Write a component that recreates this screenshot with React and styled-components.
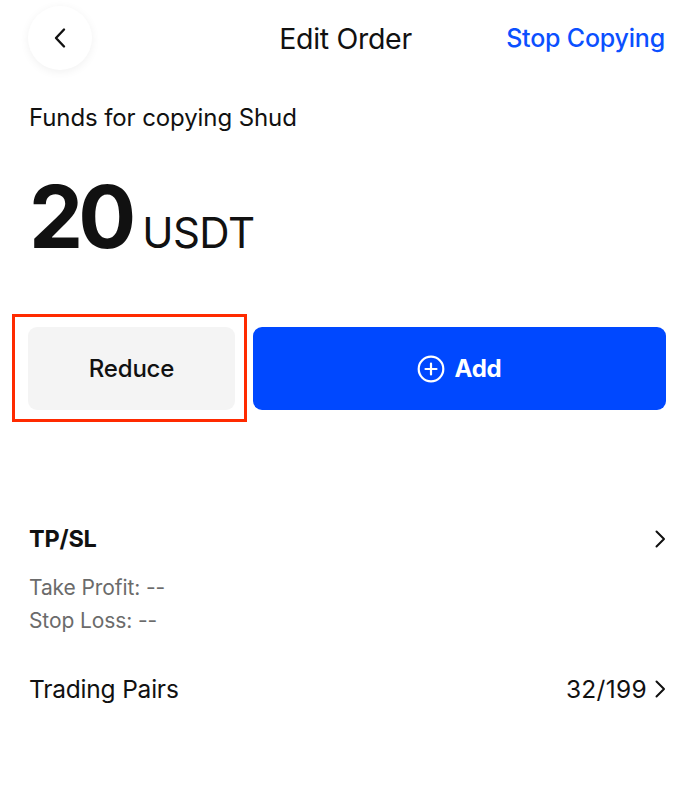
import React from 'react';
import styled, { createGlobalStyle } from 'styled-components';

const GlobalStyle = createGlobalStyle`
  html, body {
    margin: 0;
    padding: 0;
    background: #ffffff;
  }
  body {
    font-family: Inter, 'Noto Sans', Roboto, sans-serif;
    color: #111111;
  }
`;

const Page = styled.div`
  width: 695px;
  min-height: 794px;
  box-sizing: border-box;
  background: #fff;
`;

const Header = styled.header`
  display: grid;
  grid-template-columns: 1fr auto 1fr;
  align-items: center;
  padding: 6px 30px 0 28px;
  height: 64px;
`;

const BackButton = styled.button`
  width: 64px;
  height: 64px;
  border-radius: 50%;
  border: none;
  background: #fff;
  box-shadow: 0 2px 10px rgba(0, 0, 0, 0.06);
  display: flex;
  align-items: center;
  justify-content: center;
  padding: 0;
  justify-self: start;
`;

const Title = styled.h1`
  margin: 0;
  font-size: 28.5px;
  font-weight: 400;
  letter-spacing: -0.3px;
  transform: translateX(-1px);
`;

const HeaderLink = styled.a`
  justify-self: end;
  color: #0b50ff;
  font-size: 25px;
  font-weight: 500;
  letter-spacing: -0.2px;
`;

const Section = styled.section`
  padding: 0 29px;
`;

const Label = styled.p`
  margin: 33px 0 0;
  font-size: 24px;
  line-height: 30px;
  letter-spacing: -0.1px;
`;

const Amount = styled.div`
  display: flex;
  align-items: baseline;
  gap: 11px;
  margin-top: 41px;
  line-height: 1;
`;

const Big = styled.span`
  font-size: 86px;
  font-weight: 700;
  letter-spacing: -5px;
`;

const Unit = styled.span`
  font-size: 42px;
  font-weight: 400;
  letter-spacing: -0.5px;
`;

const Actions = styled.div`
  display: grid;
  grid-template-columns: 207px 1fr;
  gap: 18px;
  padding: 0 29px 0 28px;
  margin-top: 67px;
`;

const ButtonWrap = styled.div`
  position: relative;
`;

const Highlight = styled.div`
  position: absolute;
  top: -13px;
  left: -16px;
  right: -12px;
  bottom: -12px;
  border: 3px solid #ff2a00;
  pointer-events: none;
`;

const ActionButton = styled.button`
  width: 100%;
  height: 83px;
  border: none;
  border-radius: 9px;
  display: flex;
  align-items: center;
  justify-content: center;
  gap: 9px;
  font-family: inherit;
  font-size: 24px;
  letter-spacing: -0.2px;
  background: ${(p) => (p.$primary ? '#0048ff' : '#f4f4f4')};
  color: ${(p) => (p.$primary ? '#ffffff' : '#111111')};
  font-weight: ${(p) => (p.$primary ? 700 : 500)};
`;

const Row = styled.div`
  display: flex;
  align-items: center;
  justify-content: space-between;
  font-size: ${(p) => (p.$bold ? 23.5 : 24.5)}px;
  margin-top: ${(p) => p.$top || 0}px;
  font-weight: ${(p) => (p.$bold ? 700 : 400)};
  letter-spacing: -0.2px;
`;

const RowValue = styled.span`
  display: flex;
  align-items: center;
  gap: 7px;
  font-weight: 400;
  letter-spacing: 0.3px;
`;

const Detail = styled.div`
  font-size: 21px;
  color: #6b6b6b;
  line-height: 33px;
  margin-top: 18px;
  letter-spacing: -0.1px;
`;

const Chevron = () => (
  <svg width="12" height="20" viewBox="0 0 12 20" fill="none">
    <path
      d="M2.5 2.5l7.5 7.5-7.5 7.5"
      stroke="#111"
      strokeWidth="2"
      strokeLinecap="round"
      strokeLinejoin="round"
    />
  </svg>
);

const BackChevron = () => (
  <svg width="14" height="22" viewBox="0 0 14 22" fill="none">
    <path
      d="M11 2.5L3 11l8 8.5"
      stroke="#111"
      strokeWidth="2.4"
      strokeLinecap="round"
      strokeLinejoin="round"
    />
  </svg>
);

const PlusCircle = () => (
  <svg width="28" height="28" viewBox="0 0 28 28" fill="none">
    <circle cx="14" cy="14" r="12.3" stroke="#fff" strokeWidth="2.2" />
    <path d="M14 8.5v11M8.5 14h11" stroke="#fff" strokeWidth="2.2" strokeLinecap="round" />
  </svg>
);

export default function App() {
  return (
    <>
      <GlobalStyle />
      <Page>
        <Header>
          <BackButton aria-label="Back">
            <BackChevron />
          </BackButton>
          <Title>Edit Order</Title>
          <HeaderLink>Stop Copying</HeaderLink>
        </Header>

        <Section>
          <Label>Funds for copying Shud</Label>
          <Amount>
            <Big>20</Big>
            <Unit>USDT</Unit>
          </Amount>
        </Section>

        <Actions>
          <ButtonWrap>
            <Highlight />
            <ActionButton>Reduce</ActionButton>
          </ButtonWrap>
          <ActionButton $primary>
            <PlusCircle />
            Add
          </ActionButton>
        </Actions>

        <Section>
          <Row $bold $top={114}>
            TP/SL
            <Chevron />
          </Row>
          <Detail>
            Take Profit: --
            <br />
            Stop Loss: --
          </Detail>
          <Row $top={37}>
            Trading Pairs
            <RowValue>
              32/199
              <Chevron />
            </RowValue>
          </Row>
        </Section>
      </Page>
    </>
  );
}
